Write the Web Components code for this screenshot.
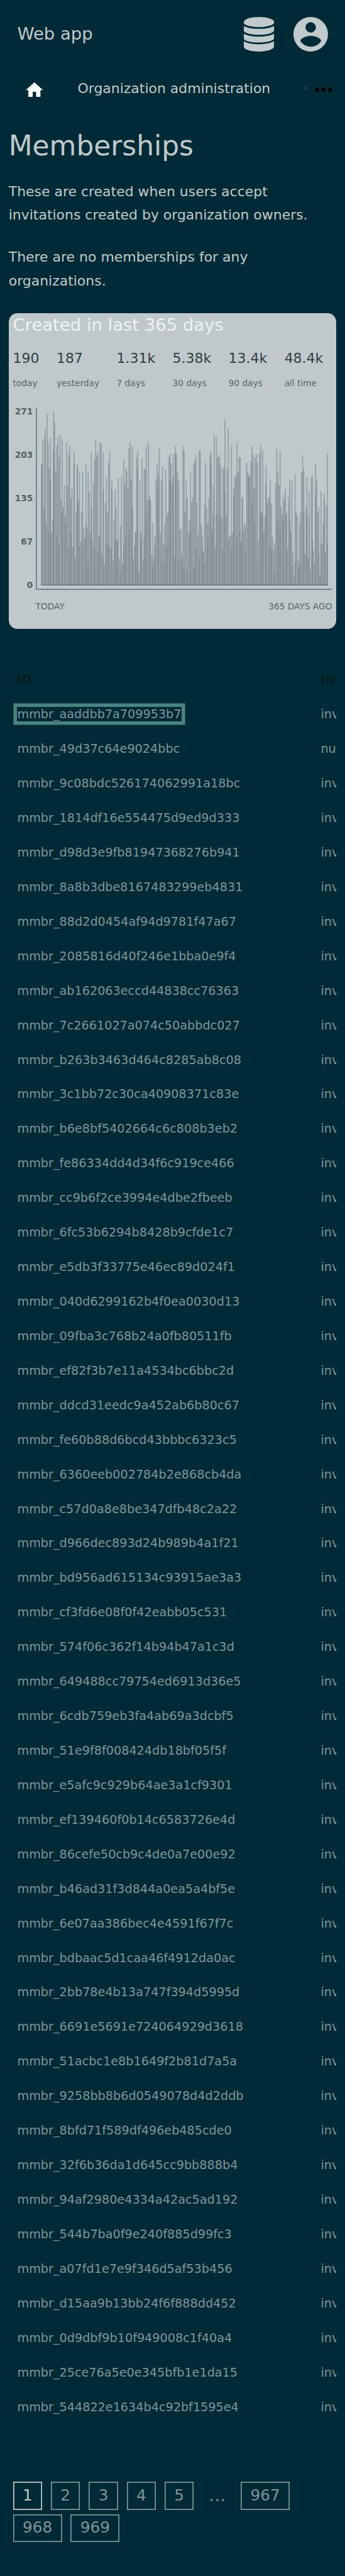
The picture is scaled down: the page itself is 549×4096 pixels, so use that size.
<!DOCTYPE html>
<html lang="en">
<head>
<meta charset="utf-8">
<title>Memberships</title>
<style>
  /* 1rem is ten design pixels at the page's scale */
  html { font-size: 8.579px; background: #002b36; }
  body { margin: 0; font-family: "DejaVu Sans", sans-serif; color: #c0c9cc; }
</style>
</head>
<body>
<admin-page></admin-page>
<script>
const define = (name, html, setup) => customElements.define(name, class extends HTMLElement {
  connectedCallback() {
    if (this.shadowRoot) return;
    const root = this.attachShadow({ mode: 'open' });
    root.innerHTML = html;
    if (setup) setup.call(this, root);
  }
});

define('app-header', `
<style>
  :host { display: flex; align-items: center; height: 12.8rem; padding: 0 3.2rem; box-sizing: border-box; }
  .name { flex: 1; font-size: 3.2rem; line-height: 4rem; position: relative; top: -0.1rem; }
  svg { display: block; fill: #c0c9cc; }
  .db { width: 5.6rem; height: 6.4rem; margin-right: 3.6rem; }
  .user { width: 6.4rem; height: 6.4rem; }
</style>
<span class="name"><slot></slot></span>
<svg class="db" viewBox="0 0 56 64"><path d="M28 0C43.500 0 56 4.200 56 9.300V11C56 14.500 43.500 18.700 28 18.700S0 14.500 0 11V9.300C0 4.200 12.500 0 28 0ZM0 16.500C6 20.300 16 22 28 22S50 20.300 56 16.500V25C56 29.500 43.500 33 28 33S0 29.500 0 25ZM0 30.800C6 34.600 16 36.300 28 36.300S50 34.600 56 30.800V39.500C56 44 43.500 47.300 28 47.300S0 44 0 39.500ZM0 45C6 48.800 16 50.600 28 50.600S50 48.800 56 45V54.700C56 60 43.500 64 28 64S0 60 0 54.700Z"/></svg>
<svg class="user" viewBox="2 2 20 20"><path d="M12 2C6.480 2 2 6.480 2 12s4.480 10 10 10 10-4.480 10-10S17.520 2 12 2zm0 3c1.660 0 3 1.340 3 3s-1.340 3-3 3-3-1.340-3-3 1.340-3 3-3zm0 14.200c-2.500 0-4.710-1.280-6-3.220.030-1.990 4-3.080 6-3.080s5.970 1.090 6 3.080c-1.290 1.940-3.500 3.220-6 3.220z"/></svg>
`);

define('app-nav', `
<style>
  :host { display: flex; align-items: center; height: 7.2rem; box-sizing: border-box; padding-left: 4.8rem; }
  svg { display: block; flex: none; }
  .home { width: 3.2rem; height: 2.72rem; fill: #fff; margin-right: 6.4rem; position: relative; top: 0.24rem; }
  .links { display: flex; gap: 6.4rem; width: 42.4rem; overflow: hidden; white-space: nowrap; font-size: 2.56rem; line-height: 4.4rem; }
  .more { width: 3.2rem; height: 0.8rem; margin-left: 1.6rem; position: relative; top: 0.2rem; }
</style>
<svg class="home" viewBox="2 3 20 17"><path d="M10 20v-6h4v6h5v-8h3L12 3 2 12h3v8z"/></svg>
<div class="links"><span><slot></slot></span><span>O</span></div>
<svg class="more" viewBox="0 0 32 8"><circle cx="4" cy="4" r="4"/><circle cx="16" cy="4" r="4"/><circle cx="28" cy="4" r="4"/></svg>
`);

define('page-intro', `
<style>
  :host { display: block; padding: 3.4rem 1.6rem 0; }
  h1 { margin: 0 0 2.7rem; font-weight: 400; font-size: 5.12rem; line-height: 7.2rem; }
  ::slotted(p) { margin: 0 0 3.4rem; font-size: 2.56rem; line-height: 4.4rem; }
</style>
<h1><slot name="title"></slot></h1>
<slot></slot>
`);

define('stat-item', `
<style>
  :host { display: flex; flex-direction: column; white-space: nowrap; }
  .v { font-size: 2.56rem; line-height: 4rem; color: #343c3f; }
  .l { font-size: 1.6rem; line-height: 2.4rem; margin-top: 1.3rem; color: #596466; }
</style>
<span class="v"></span><span class="l"><slot></slot></span>
`, function (root) { root.querySelector('.v').textContent = this.getAttribute('value'); });

/* Column tops in thirds of a plot unit, measured down from y = 0; "a/b" adds the top b of the shaded overlap. */
const COLUMNS = `360/372 228 600 162/210 696 84 240/738 384 216/450 744 672 72/294 132 402 258/756 210 324/816 198 564 228/630 600 480 648/690 240 486 306/834 258 552/744 498 822 294/360 882 624 360/384 564 408/822 792 624 402/804 720 774 360/696 720 408/918 516 744 294/594 792 468 336/822 228 312 294/852 756 246/774 246 864 294/504 918 576 438/804 630 354/816 294 834 456/504 900 672 504/786 600 786/792 438 888 708/966 432 918 336/816 480 384/774 402 498 276/726 240 450 264/612 888 816 738/744 324 288/390 960 456 744/792 336 900 390/768 390 264/642 564 240 534/564 564 864 690/930 888 768/816 450 360 420/504 276 744 456/900 372 804 696/912 390 648/822 630 324 306/450 360 468
306/432 882 264/306 306 408 456/900 726 720 864/900 264 288/948 624 450 552/960 744 672 402/726 576 546 360/936 342 312/834 576 756 288/882 288 696 756/822 852 582/912 354 600 690/774 552 312 288/354 726 486/648 198 822 216/642 324 324 312/648 372 660 390/840 372 114/516 648 390 162/792 768 756 258/834 744 498/534 432 432 240/768 408 324 324/738 792 546/552 738 690 708/852 354 402 432/432 420 342 264/576 306 498/690 324 306 354/900 792 306 258/630 624 288/648 738 648 372/468 582 552 546/822 450 582/840 768 840 804/960 468 276 402/690 480 294/738 600 642 528/678 564 498 630/648 834 546 450/672 738 456/930 852 978 420/912 624 648 900/936 696 630/930 408 312 390/630 864 600 432/642 888 516/660 948 438 420/786 834 912 360/534 450 630 600/864 978 516/816 804 690 528/564 852 594 306/804`
  .split(/\s+/).map(c => c.split('/').map(n => n / 3));

define('bar-chart', `
<style>
  :host { display: grid; grid-template-columns: 4.5rem 55rem; column-gap: 0.5rem; color: #556062; font-size: 1.6rem; line-height: 2rem; }
  .y { display: flex; flex-direction: column; justify-content: space-between; text-align: right; font-weight: 700; height: 34.16rem; margin-top: -0.3rem; }
  svg { display: block; width: 55rem; height: 33.8rem; }
  .x { grid-column: 2; display: flex; justify-content: space-between; margin-top: 2.04rem; color: #5a6567; }
</style>
<div class="y"><span>271</span><span>203</span><span>135</span><span>67</span><span>0</span></div>
<svg viewBox="66 16 550 338">
  <path class="light" fill="#969ea6"/><path class="dark" fill="#828a92"/>
  <path fill="#767d85" d="M76 344H608V346H76Z"/><path class="foot" fill="#575d64"/>
  <path fill="#6b7783" d="M66 16H68V352H616V354H66Z"/>
</svg>
<div class="x"><span>TODAY</span><span>365 DAYS AGO</span></div>
`, function (root) {
  let light = 'M76 346', dark = '', foot = '';
  COLUMNS.forEach(([top, over], i) => {
    const x = 76 + i * 2;
    light += `V${top.toFixed(2)}H${x + 2}`;
    if (over !== undefined) {
      dark += `M${x} ${over.toFixed(2)}h2V344h-2Z`;
      foot += `M${x} 344h2v2h-2Z`;
    }
  });
  root.querySelector('.light').setAttribute('d', light + 'V346Z');
  root.querySelector('.dark').setAttribute('d', dark);
  root.querySelector('.foot').setAttribute('d', foot);
});

define('stats-card', `
<style>
  :host { display: block; box-sizing: border-box; width: 60.8rem; height: 58.6rem; margin: 3.7rem 1.6rem 0; padding: 0.3rem 0.8rem; border-radius: 1.6rem; background: #bfc9cc; }
  h2 { margin: 0; font-weight: 400; font-size: 3.2rem; line-height: 4rem; color: #eef2f3; }
  .stats { display: flex; gap: 3.2rem; margin-top: 2.2rem; }
  bar-chart { margin: 3.4rem 0 0 -0.8rem; }
</style>
<h2><slot name="title"></slot></h2>
<div class="stats"><slot></slot></div>
<bar-chart></bar-chart>
`);

define('member-row', `
<style>
  :host { display: grid; grid-template-columns: 56.3rem 1fr; height: 6.402rem; align-items: center; font-size: 2.24rem; line-height: 2.6rem; white-space: nowrap; color: #7f949a; }
  :host([head]) { color: #001b22; font-weight: 700; }
  .ref { overflow: hidden; }
  :host([selected]) .id { box-shadow: 0 0 0 0.65rem #498483; }
</style>
<span><span class="id"><slot></slot></span></span><span class="ref"></span>
`, function (root) { root.querySelector('.ref').textContent = this.getAttribute('ref') || 'inv'; });

const IDS = `aaddbb7a709953b7 49d37c64e9024bbc 9c08bdc526174062991a18bc 1814df16e554475d9ed9d333 d98d3e9fb81947368276b941 8a8b3dbe8167483299eb4831 88d2d0454af94d9781f47a67 2085816d40f246e1bba0e9f4
ab162063eccd44838cc76363 7c2661027a074c50abbdc027 b263b3463d464c8285ab8c08 3c1bb72c30ca40908371c83e b6e8bf5402664c6c808b3eb2 fe86334dd4d34f6c919ce466 cc9b6f2ce3994e4dbe2fbeeb 6fc53b6294b8428b9cfde1c7 e5db3f33775e46ec89d024f1 040d6299162b4f0ea0030d13 09fba3c768b24a0fb80511fb ef82f3b7e11a4534bc6bbc2d ddcd31eedc9a452ab6b80c67 fe60b88d6bcd43bbbc6323c5
6360eeb002784b2e868cb4da c57d0a8e8be347dfb48c2a22 d966dec893d24b989b4a1f21 bd956ad615134c93915ae3a3 cf3fd6e08f0f42eabb05c531 574f06c362f14b94b47a1c3d 649488cc79754ed6913d36e5 6cdb759eb3fa4ab69a3dcbf5 51e9f8f008424db18bf05f5f e5afc9c929b64ae3a1cf9301 ef139460f0b14c6583726e4d 86cefe50cb9c4de0a7e00e92 b46ad31f3d844a0ea5a4bf5e 6e07aa386bec4e4591f67f7c
bdbaac5d1caa46f4912da0ac 2bb78e4b13a747f394d5995d 6691e5691e724064929d3618 51acbc1e8b1649f2b81d7a5a 9258bb8b6d0549078d4d2ddb 8bfd71f589df496eb485cde0 32f6b36da1d645cc9bb888b4 94af2980e4334a42ac5ad192 544b7ba0f9e240f885d99fc3 a07fd1e7e9f346d5af53b456 d15aa9b13bb24f6f888dd452 0d9dbf9b10f949008c1f40a4 25ce76a5e0e345bfb1e1da15 544822e1634b4c92bf1595e4`.split(/\s+/);

define('member-table', `
<style>
  :host { display: block; margin: 6.28rem 1.6rem 0 3.2rem; }
</style>
<member-row head ref="Inv">ID</member-row>
`, function (root) {
  IDS.forEach((id, i) => {
    const row = document.createElement('member-row');
    row.textContent = 'mmbr_' + id;
    if (i === 0) row.setAttribute('selected', '');
    if (i === 1) row.setAttribute('ref', 'nu');
    root.append(row);
  });
});

define('page-link', `
<style>
  :host { display: block; box-sizing: border-box; height: 5.2rem; padding: 0.2rem 1.8rem; box-shadow: inset 0 0 0 0.2rem #7f949a; color: #7f949a; font-size: 2.88rem; line-height: 4.6rem; }
  :host([current]) { box-shadow: inset 0 0 0 0.2rem #c0c9cc; color: #c0c9cc; }
  :host([gap]) { box-shadow: none; width: 5.5rem; padding: 0.2rem 0; text-align: center; font-size: 3.2rem; }
</style>
<slot></slot>
`);

define('page-links', `
<style>
  :host { display: flex; flex-wrap: wrap; gap: 0.8rem 1.6rem; margin: 10.6rem 6.4rem 0 2.4rem; }
</style>
<slot></slot>
`);

define('admin-page', `
<style>
  :host { display: block; height: 4096px; overflow: hidden; }
</style>
<app-header>Web app</app-header>
<app-nav>Organization administration</app-nav>
<page-intro>
  <span slot="title">Memberships</span>
  <p>These are created when users accept invitations created by organization owners.</p>
  <p>There are no memberships for any organizations.</p>
</page-intro>
<stats-card>
  <span slot="title">Created in last 365 days</span>
  <stat-item value="190">today</stat-item>
  <stat-item value="187">yesterday</stat-item>
  <stat-item value="1.31k">7 days</stat-item>
  <stat-item value="5.38k">30 days</stat-item>
  <stat-item value="13.4k">90 days</stat-item>
  <stat-item value="48.4k">all time</stat-item>
</stats-card>
<member-table></member-table>
<page-links>
  <page-link current>1</page-link><page-link>2</page-link><page-link>3</page-link><page-link>4</page-link><page-link>5</page-link>
  <page-link gap>…</page-link>
  <page-link>967</page-link><page-link>968</page-link><page-link>969</page-link>
</page-links>
`);
</script>
</body>
</html>
